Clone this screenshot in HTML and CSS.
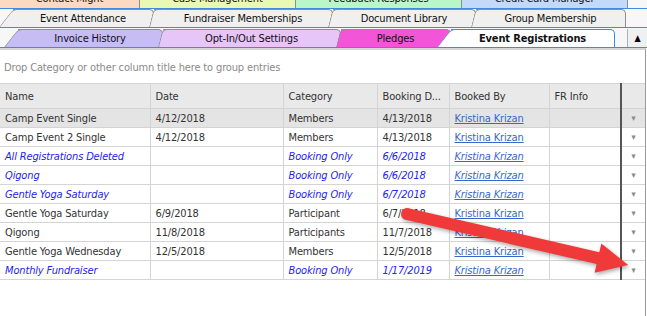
FILE: index.html
```html
<!DOCTYPE html>
<html lang="en">
<head>
  <meta charset="UTF-8">
  <title>Event Registrations</title>
  <link rel="stylesheet" href="styles.css">
</head>
<body>
  <div class="tab-rows">
    <div class="tab-row row-top">
      <div class="tab peach" style="width:140px">Contact Might</div>
      <div class="tab lime" style="width:156px">Case Management</div>
      <div class="tab mint" style="width:166px">Feedback Responses</div>
      <div class="tab sky" style="width:166px">Credit Card Manager</div>
    </div>
    <div class="tab-row">
      <div class="tab first" style="width:141px">Event Attendance</div>
      <div class="tab" style="width:179px">Fundraiser Memberships</div>
      <div class="tab" style="width:143px">Document Library</div>
      <div class="tab" style="width:150px">Group Membership</div>
    </div>
    <div class="tab-row">
      <div class="tab first lavender" style="width:145px">Invoice History</div>
      <div class="tab violet" style="width:178px">Opt-In/Out Settings</div>
      <div class="tab magenta" style="width:110px">Pledges</div>
      <div class="tab first active" style="width:164px">Event Registrations</div>
      <div class="scroll-btn">&#9650;</div>
    </div>
  </div>

  <div class="grid-panel">
    <div class="group-area">Drop Category or other column title here to group entries</div>
    <table class="grid">
      <colgroup>
        <col style="width:150px"><col style="width:133px"><col style="width:94px">
        <col style="width:72px"><col style="width:100px"><col style="width:72px"><col style="width:24px">
      </colgroup>
      <thead>
        <tr>
          <th>Name</th><th>Date</th><th>Category</th><th>Booking D...</th><th>Booked By</th><th class="last">FR Info</th><th class="drop"></th>
        </tr>
      </thead>
      <tbody>
        <tr class="selected"><td>Camp Event Single</td><td>4/12/2018</td><td>Members</td><td>4/13/2018</td><td><a>Kristina Krizan</a></td><td class="last"></td><td class="drop">▾</td></tr>
        <tr><td>Camp Event 2 Single</td><td>4/12/2018</td><td>Members</td><td>4/13/2018</td><td><a>Kristina Krizan</a></td><td class="last"></td><td class="drop">▾</td></tr>
        <tr class="booking"><td>All Registrations Deleted</td><td></td><td>Booking Only</td><td>6/6/2018</td><td><a>Kristina Krizan</a></td><td class="last"></td><td class="drop">▾</td></tr>
        <tr class="booking"><td>Qigong</td><td></td><td>Booking Only</td><td>6/6/2018</td><td><a>Kristina Krizan</a></td><td class="last"></td><td class="drop">▾</td></tr>
        <tr class="booking"><td>Gentle Yoga Saturday</td><td></td><td>Booking Only</td><td>6/7/2018</td><td><a>Kristina Krizan</a></td><td class="last"></td><td class="drop">▾</td></tr>
        <tr><td>Gentle Yoga Saturday</td><td>6/9/2018</td><td>Participant</td><td>6/7/2018</td><td><a>Kristina Krizan</a></td><td class="last"></td><td class="drop">▾</td></tr>
        <tr><td>Qigong</td><td>11/8/2018</td><td>Participants</td><td>11/7/2018</td><td><a>Kristina Krizan</a></td><td class="last"></td><td class="drop">▾</td></tr>
        <tr><td>Gentle Yoga Wednesday</td><td>12/5/2018</td><td>Members</td><td>12/5/2018</td><td><a>Kristina Krizan</a></td><td class="last"></td><td class="drop">▾</td></tr>
        <tr class="booking"><td>Monthly Fundraiser</td><td></td><td>Booking Only</td><td>1/17/2019</td><td><a>Kristina Krizan</a></td><td class="last"></td><td class="drop">▾</td></tr>
      </tbody>
    </table>
  </div>

  <svg class="callout" width="647" height="316" viewBox="0 0 647 316">
    <g transform="translate(407 214) rotate(13)">
      <circle cx="0" cy="0" r="6" fill="#f03a3a"/>
      <polygon points="0,-6 196,-6 196,-15 227,0 196,15 196,6 0,6" fill="#f03a3a"/>
    </g>
  </svg>
</body>
</html>
```

FILE: styles.css
```css
body {
  margin: 0;
  width: 647px;
  height: 316px;
  overflow: hidden;
  position: relative;
  background: #fff;
  font-family: "DejaVu Sans Condensed", "DejaVu Sans", sans-serif;
  font-size: 11px;
  letter-spacing: -0.15px;
  color: #333;
}
.tab-rows {
  background: #f7f7f7;
}
.tab-row {
  display: flex;
  height: 18px;
  padding-top: 1px;
  border-bottom: 1px solid #3d8ce2;
}
.row-top {
  margin-top: -10px;
  padding-top: 0;
  height: 18px;
}
.tab-row:nth-child(2) {
  padding-top: 0;
}
.tab {
  position: relative;
  box-sizing: border-box;
  height: 18px;
  line-height: 17px;
  text-align: center;
  color: #111;
  background: #f0f0f0;
  border-top: 1px solid #8e8e8e;
  border-right: 1px solid #8e8e8e;
  border-top-right-radius: 5px;
  white-space: nowrap;
}
.tab-row .tab::before {
  content: '';
  position: absolute;
  top: -1px;
  bottom: 0;
  left: -5px;
  width: 9px;
  background: inherit;
  border-top: 1px solid #8e8e8e;
  border-left: 1px solid #8e8e8e;
  border-top-left-radius: 5px;
  transform: skewX(-14deg);
  transform-origin: bottom left;
}
.tab-row .tab.first::before {
  left: -14px;
  width: 22px;
  transform: skewX(-38deg);
}
.tab-row .tab:first-child {
  margin-left: 13px;
}
.tab-row:last-child .tab:first-child {
  margin-left: 18px;
}
.row-top .tab {
  line-height: 18px;
  border-radius: 0;
  border-top: none;
}
.row-top .tab:first-child {
  margin-left: 0;
}
.row-top .tab::before {
  display: none;
}
.peach { background: #fdd9c1; }
.lime { background: #e9f9b4; }
.mint { background: #b9f7c9; }
.sky { background: #c3d9f9; }
.lavender { background: #c8bcf5; }
.violet { background: #e8c5f7; }
.magenta { background: #f255d7; }
.tab.active {
  background: #fff;
  font-weight: bold;
  border-color: #3d8ce2;
}
.tab.active::before {
  border-color: #3d8ce2;
}
.scroll-btn {
  width: 19px;
  margin-left: auto;
  height: 18px;
  line-height: 18px;
  text-align: center;
  font-size: 9px;
  color: #000;
  background: #f0f0f0;
  border-left: 1px solid #b0b0b0;
}
.grid-panel {
  border-top: 2px solid #d6d6d6;
  border-right: 1px solid #9a9a9a;
  width: 645px;
  height: 272px;
}
.group-area {
  height: 33px;
  line-height: 36px;
  padding-left: 4px;
  color: #8a8a8a;
}
.grid {
  border-collapse: collapse;
  table-layout: fixed;
  width: 645px;
}
.grid th,
.grid td {
  padding: 0 0 0 5px;
  border: 1px solid #d4d4d4;
  border-top: none;
  text-align: left;
  font-weight: normal;
  white-space: nowrap;
  overflow: hidden;
}
.grid th {
  height: 24px;
  background: #e9e9e9;
  border-top: 1px solid #d4d4d4;
  color: #333;
}
.grid td {
  height: 18px;
}
.grid th:first-child,
.grid td:first-child {
  border-left: none;
}
.grid .last {
  border-right: 2px solid #555;
}
.grid .drop {
  border-right: none;
  padding: 0;
  text-align: center;
  color: #8a8a8a;
  font-size: 9px;
}
.grid tr.selected td {
  background: #e4e4e4;
}
.grid a {
  color: #3767c9;
  text-decoration: underline;
}
.grid tr.booking td {
  font-style: italic;
  color: #2424ec;
}
.grid tr.booking td.drop {
  font-style: normal;
  color: #8a8a8a;
}
.callout {
  position: absolute;
  left: 0;
  top: 0;
  filter: drop-shadow(1px 2px 2px rgba(0, 0, 0, 0.35));
}
```
